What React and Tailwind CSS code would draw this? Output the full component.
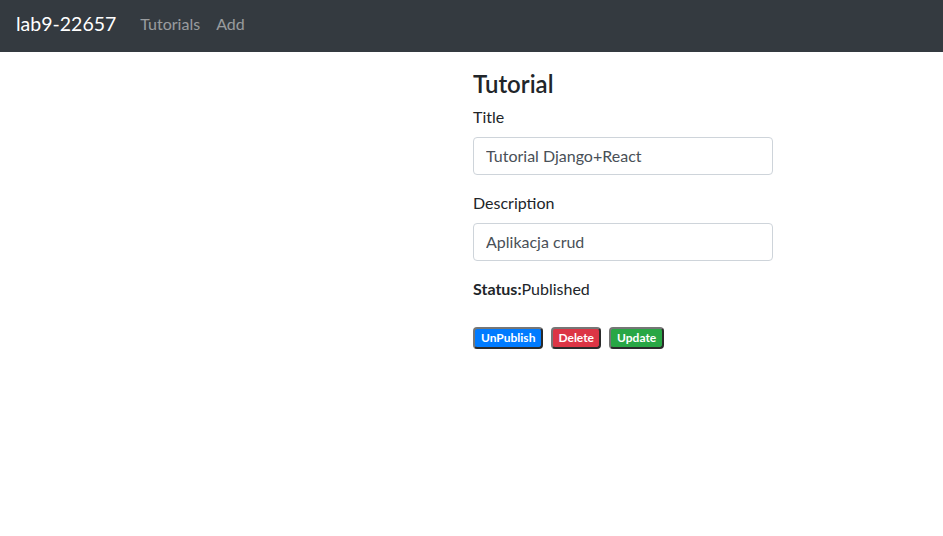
export default function App() {
 const badge =
  "text-white text-[12px] font-bold leading-none px-[5px] py-[3px] rounded border-2 border-t-[#767676] border-l-[#767676] border-b-[#2b2b2b] border-r-[#2b2b2b]";
 return (
  <div className="min-h-[536px] bg-white text-[#212529] font-['Lato','Liberation_Sans',sans-serif]">
   <nav className="h-[52px] bg-[#343a40] flex items-center px-4 pb-1">
    <a href="#" className="text-white text-[19.5px] mr-4">lab9-22657</a>
    <div className="flex text-[16px]">
     <a href="#" className="px-2 text-white/50">Tutorials</a>
     <a href="#" className="px-2 text-white/50">Add</a>
    </div>
   </nav>

   <div className="mt-4 ml-[473px] w-[300px]">
    <h4 className="text-[24px] font-semibold leading-[1.2] pt-[2px]">Tutorial</h4>
    <form className="mt-[6px]">
     <div className="mb-4">
      <label className="block mb-2 text-[16px] leading-6">Title</label>
      <input
       type="text"
       defaultValue="Tutorial Django+React"
       className="block w-full h-[38px] px-3 text-[16px] text-[#495057] border border-[#ced4da] rounded"
      />
     </div>
     <div className="mb-4">
      <label className="block mb-2 text-[16px] leading-6">Description</label>
      <input
       type="text"
       defaultValue="Aplikacja crud"
       className="block w-full h-[38px] px-3 text-[16px] text-[#495057] border border-[#ced4da] rounded"
      />
     </div>
     <p className="text-[16px] leading-6 mb-4">
      <strong className="font-bold">Status:</strong>Published
     </p>
    </form>

    <div className="flex gap-2 mt-[26px]">
     <button className={`bg-[#007bff] px-[6px] ${badge}`}>UnPublish</button>
     <button className={`bg-[#dc3545] ${badge}`}>Delete</button>
     <button className={`bg-[#28a745] px-[6px] ${badge}`}>Update</button>
    </div>
   </div>
  </div>
 );
}
